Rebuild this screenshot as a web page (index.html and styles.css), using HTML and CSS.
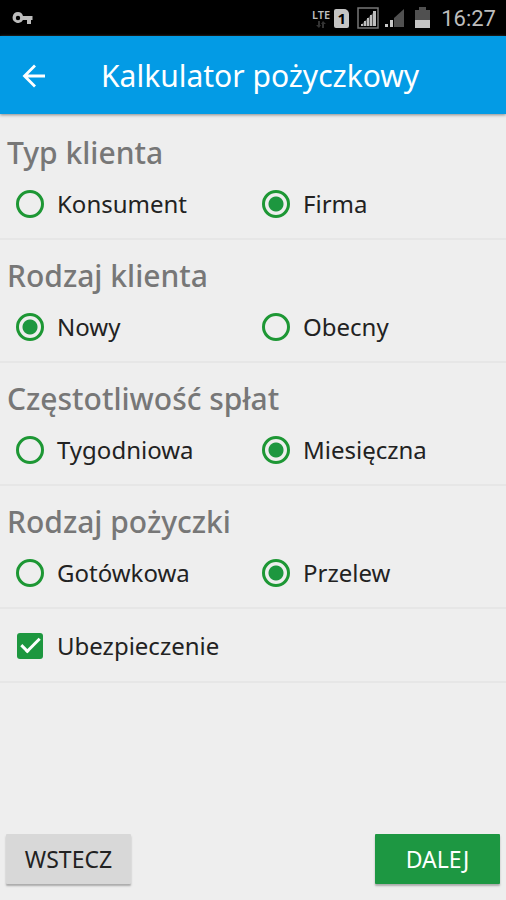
FILE: index.html
```html
<!DOCTYPE html>
<html lang="pl">
<head>
<meta charset="utf-8">
<meta name="viewport" content="width=device-width, initial-scale=1">
<title>Kalkulator pożyczkowy</title>
<link rel="stylesheet" href="styles.css">
</head>
<body>
<div class="status-bar">
  <svg class="key" width="22" height="14" viewBox="0 0 22 14" aria-hidden="true"><path fill="#bdbdbd" fill-rule="evenodd" d="M6 1a5.500 5.500 0 1 0 5 8h4v4h4V9h1.500V5H11a5.500 5.500 0 0 0-5-4zM6 4.800a2.200 2.200 0 1 1 0 4.400a2.200 2.200 0 0 1 0-4.400z"/></svg>
  <div class="indicators">
    <div class="network">
      <span class="lte">LTE</span>
      <svg width="10" height="7" viewBox="0 0 10 7" aria-hidden="true"><path fill="#333" d="M2 0h2v4h1L3 7 0 4h2zM6 7V3H5l2-3 3 3H8v4z"/></svg>
    </div>
    <span class="sim">1</span>
    <svg class="signal-box" width="22" height="22" viewBox="0 0 22 22" aria-hidden="true"><path fill="none" stroke="#777" stroke-width="1.500" d="M1 1h20v20H1z"/><path fill="#555" d="M4 18L18 4v15H4z"/><path fill="#bdbdbd" d="M4 17h2v2H4zM7 14h2v5H7zM10 11h2v8h-2zM13 8h2v11h-2zM16 4h3v15h-3z"/></svg>
    <svg class="signal" width="20" height="20" viewBox="0 0 20 20" aria-hidden="true"><path fill="#505050" d="M9 10l10-9v18H9z"/><path fill="#c8c8c8" d="M0 16h3v3H0zM5 12h3v7H5z"/></svg>
    <svg class="battery" width="16" height="22" viewBox="0 0 16 22" aria-hidden="true"><path fill="#505050" d="M0 3h4V0h7v3h4v11H0z"/><path fill="#c4c4c4" d="M0 13h15v8H0z"/></svg>
    <span class="clock">16:27</span>
  </div>
</div>
<header class="app-bar">
  <button class="back" type="button" aria-label="Wstecz">
    <svg width="24" height="24" viewBox="0 0 24 24" aria-hidden="true"><path fill="none" stroke="#fff" stroke-width="2.800" d="M23 12H3M13 1.500L2.500 12 13 22.500"/></svg>
  </button>
  <h1>Kalkulator pożyczkowy</h1>
</header>
<form class="calculator">
  <fieldset>
    <legend>Typ klienta</legend>
    <div class="options">
      <label><input type="radio" name="typ"><span>Konsument</span></label>
      <label><input type="radio" name="typ" checked><span>Firma</span></label>
    </div>
  </fieldset>
  <fieldset>
    <legend>Rodzaj klienta</legend>
    <div class="options">
      <label><input type="radio" name="klient" checked><span>Nowy</span></label>
      <label><input type="radio" name="klient"><span>Obecny</span></label>
    </div>
  </fieldset>
  <fieldset>
    <legend>Częstotliwość spłat</legend>
    <div class="options">
      <label><input type="radio" name="splata"><span>Tygodniowa</span></label>
      <label><input type="radio" name="splata" checked><span>Miesięczna</span></label>
    </div>
  </fieldset>
  <fieldset>
    <legend>Rodzaj pożyczki</legend>
    <div class="options">
      <label><input type="radio" name="pozyczka"><span>Gotówkowa</span></label>
      <label><input type="radio" name="pozyczka" checked><span>Przelew</span></label>
    </div>
  </fieldset>
  <div class="insurance">
    <label><input type="checkbox" checked><span>Ubezpieczenie</span></label>
  </div>
  <div class="actions">
    <button class="secondary" type="button">WSTECZ</button>
    <button class="primary" type="submit">DALEJ</button>
  </div>
</form>
</body>
</html>
```
FILE: styles.css
```css
*,
*::before {
  box-sizing: border-box;
}

body {
  margin: 0;
  min-height: 100vh;
  display: flex;
  flex-direction: column;
  background: #eee;
  color: #222;
  font-family: "Noto Sans", "Open Sans", sans-serif;
}

svg {
  display: block;
  flex: none;
}

.status-bar {
  display: flex;
  align-items: center;
  justify-content: space-between;
  height: 36px;
  padding: 0 10px 0 12px;
  background: #000;
  color: #bdbdbd;
}

.indicators {
  display: flex;
  align-items: center;
}

.network {
  display: flex;
  flex-direction: column;
  align-items: center;
  gap: 1px;
}

.lte {
  font-size: 11px;
  line-height: 11px;
  font-weight: 600;
}

.sim {
  width: 15px;
  margin-left: 4px;
  border-radius: 2px 5px 2px 2px;
  background: #c4c4c4;
  color: #000;
  font-size: 15px;
  font-weight: 700;
  line-height: 19px;
  text-align: center;
}

.signal-box {
  margin-left: 8px;
}

.signal {
  margin-left: 6px;
}

.battery {
  margin-left: 10px;
}

.clock {
  padding-top: 2px;
  margin-left: 10px;
  font-family: Roboto, sans-serif;
  font-size: 22px;
  line-height: 28px;
}

.app-bar {
  display: flex;
  align-items: center;
  gap: 55px;
  height: 78px;
  padding: 2px 22px 0;
  background: #039be5;
  box-shadow: 0 1px 3px #888;
  color: #fff;
}

.back {
  padding: 0;
  border: 0;
  background: none;
}

h1 {
  margin: 0;
  font-size: 30px;
  font-weight: 400;
  line-height: 40px;
}

.calculator {
  flex: 1;
  display: flex;
  flex-direction: column;
  padding-top: 3px;
}

fieldset {
  min-width: 0;
  height: 123px;
  margin: 0;
  padding: 0 7px;
  border: 0;
  border-bottom: 2px solid #e6e6e6;
}

legend {
  float: left;
  width: 100%;
  padding: 16px 0 0;
  color: #777;
  font-size: 30px;
  font-weight: 500;
  line-height: 40px;
}

.options {
  clear: both;
  display: grid;
  grid-template-columns: 1fr 1fr;
  padding-top: 11px;
}

label {
  display: flex;
  align-items: center;
  gap: 13px;
  padding-left: 9px;
  font-size: 24px;
  line-height: 40px;
}

input {
  appearance: none;
  flex: none;
  width: 28px;
  height: 28px;
  margin: 0;
  border: 3px solid #1d9734;
  border-radius: 50%;
}

input[type="radio"]:checked {
  background: radial-gradient(circle, #1d973f 7px, transparent 8px);
}

input[type="checkbox"] {
  width: 26px;
  height: 26px;
  margin: 0 1px;
  border: 0;
  border-radius: 3px;
  background: #1d973f;
}

input[type="checkbox"]:checked::before {
  content: "";
  display: block;
  width: 19px;
  height: 10px;
  margin: 5px 4px;
  border: solid #fff;
  border-width: 0 0 3px 3px;
  transform: rotate(-45deg);
}

.insurance {
  padding: 17px 7px 15px;
  border-bottom: 2px solid #e6e6e6;
}

.actions {
  display: flex;
  justify-content: space-between;
  margin-top: auto;
  padding: 0 6px 16px;
}

.actions button {
  width: 125px;
  height: 50px;
  padding: 0;
  border: 0;
  border-radius: 1px;
  box-shadow: 0 2px 2px #aaa;
  font: 23px/40px "Noto Sans", "Open Sans", sans-serif;
}

.secondary {
  background: #d8d8d8;
  color: #222;
}

.actions .primary {
  background: #1d9742;
  color: #fff;
}
```
